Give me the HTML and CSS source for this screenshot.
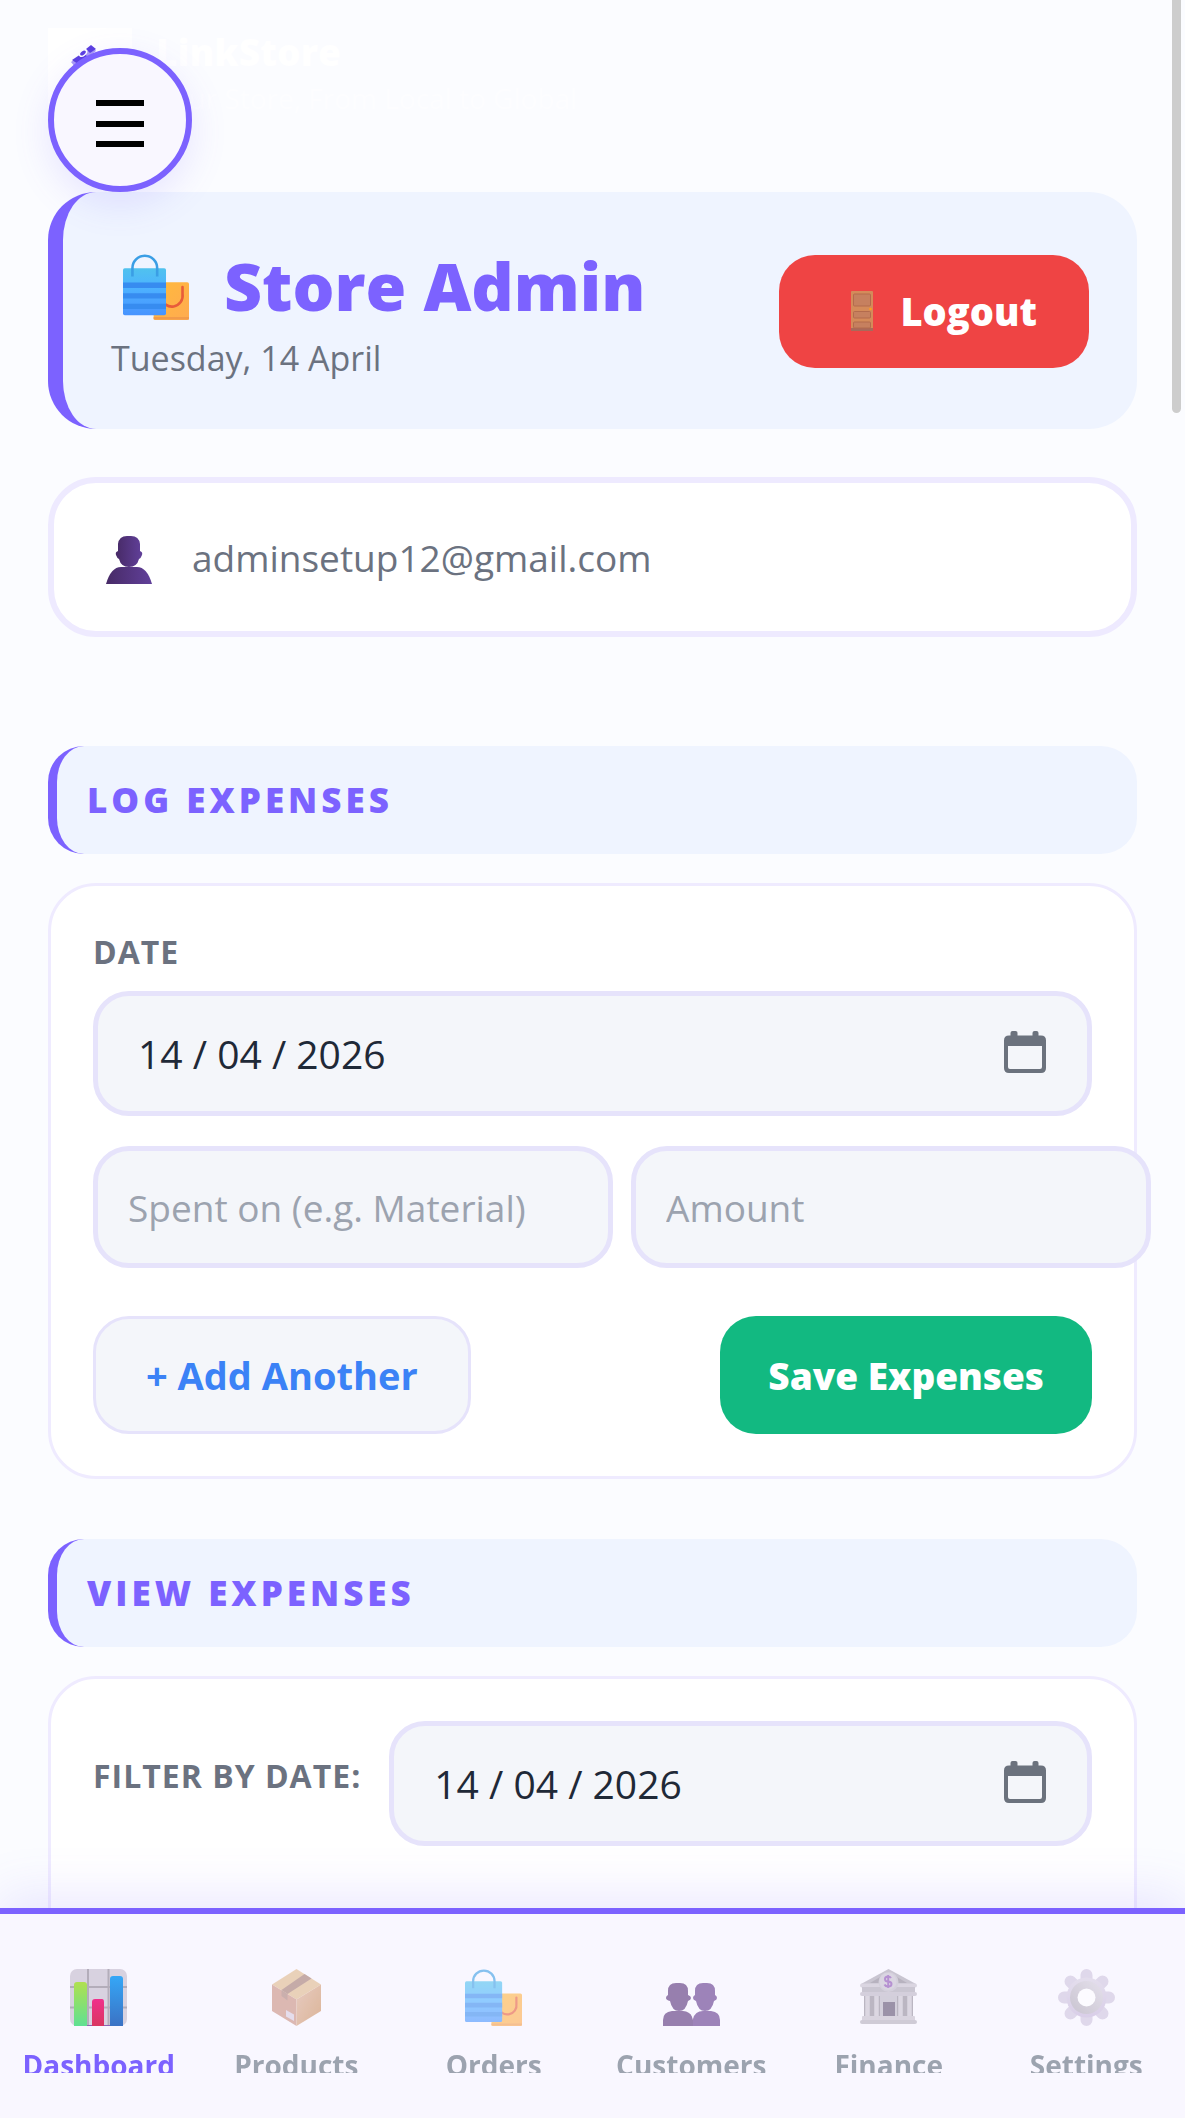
FILE: index.html
```
<!DOCTYPE html>
<html lang="en">
<head>
<meta charset="utf-8">
<meta name="viewport" content="width=device-width, initial-scale=1">
<title>LinkStore – Store Admin</title>
<link rel="stylesheet" href="styles.css">
</head>
<body>
<svg class="defs" aria-hidden="true">
  <defs>
    <linearGradient id="bagBlue" x1="0" y1="0" x2="0" y2="1"><stop offset="0" stop-color="#50c2ee"/><stop offset=".4" stop-color="#4db3ff"/><stop offset="1" stop-color="#4793ff"/></linearGradient>
    <linearGradient id="bagOrange" x1="0" y1="0" x2="1" y2="1"><stop offset="0" stop-color="#ffba3c"/><stop offset="1" stop-color="#ffab50"/></linearGradient>
    <linearGradient id="plum" x1="0" y1="0" x2="1" y2="0"><stop offset="0" stop-color="#472a66"/><stop offset="1" stop-color="#61409a"/></linearGradient>
    <linearGradient id="barGreen" x1="0" y1="0" x2="0" y2="1"><stop offset="0" stop-color="#b0e050"/><stop offset="1" stop-color="#5fe092"/></linearGradient>
    <linearGradient id="barRed" x1="0" y1="0" x2="0" y2="1"><stop offset="0" stop-color="#f0308c"/><stop offset="1" stop-color="#d93660"/></linearGradient>
    <linearGradient id="barBlue" x1="0" y1="0" x2="0" y2="1"><stop offset="0" stop-color="#35a7f7"/><stop offset="1" stop-color="#3b72c4"/></linearGradient>
    <linearGradient id="boxRight" x1="0" y1="0" x2="1" y2="1"><stop offset="0" stop-color="#dcae98"/><stop offset="1" stop-color="#c98a55"/></linearGradient>
    <linearGradient id="gearFill" x1="0" y1="0" x2="0" y2="1"><stop offset="0" stop-color="#d6cee2"/><stop offset="1" stop-color="#c5b4da"/></linearGradient>
    <linearGradient id="gearRing" x1="1" y1="0" x2="0" y2="1"><stop offset="0" stop-color="#d8d2e0"/><stop offset="1" stop-color="#aaa3b2"/></linearGradient>
  </defs>
  <symbol id="bags" viewBox="0 0 56 56">
    <rect x="26" y="24" width="30" height="32" rx="1.5" fill="url(#bagOrange)"/>
    <path d="M26 54.500h30" stroke="#f29b4a" stroke-width="2"/>
    <path d="M50.500 28v6a9 9 0 0 1-18 3" fill="none" stroke="#e85c3a" stroke-width="2.200" stroke-linecap="round"/>
    <rect y="12" width="36.500" height="40" rx="1.500" fill="url(#bagBlue)"/>
    <path d="M0 26.500h36.500M0 35.500h36.500M0 44.500h36.500" stroke="#378cf0" stroke-width="4.500"/>
    <path d="M8 19v-7a10.500 10.500 0 0 1 21 0v7" fill="none" stroke="#3a9ee5" stroke-width="2.200"/>
  </symbol>
  <symbol id="person" viewBox="0 0 46 48">
    <path d="M12 8q1-8 9-8h4q8 0 9 8v7q3 1 2 4t-3 4q-2 8-10 8t-10-8q-2-1-3-4t2-4z" fill="url(#plum)"/>
    <path d="M0 48q5-17 15-17h16q10 0 15 17z" fill="url(#plum)"/>
  </symbol>
  <symbol id="people" viewBox="0 0 57 57">
    <g fill="#61378c">
      <path d="M32 22q0-8 8-8h4q8 0 8 8v4q2 1 2 3t-3 3q-2 10-9 10t-9-10q-3-1-3-3t2-3zM30 57V50q2-8 10-8h8q9 1 9 9v6z"/>
    </g>
    <g fill="#57307a">
      <path d="M5 22q0-8 8-8h4q8 0 8 8v4q3 1 3 3t-3 3q-2 10-9 10T7 32q-4-1-4-3t2-3zM0 57v-6q0-8 9-9h11q9 1 10 9v6z"/>
    </g>
  </symbol>
  <symbol id="door" viewBox="0 0 22 40">
    <rect width="22" height="40" rx="1" fill="#d48b5a"/>
    <path d="M0 38.500h22" stroke="#a9695a" stroke-width="3"/>
    <g fill="#c6805f" stroke="#b36b4d"><rect x="2.500" y="3" width="17" height="12" rx="1"/><rect x="2.500" y="20.500" width="17" height="6.500" rx="1"/><rect x="2.500" y="31" width="17" height="6" rx="1"/></g>
    <circle cx="19.500" cy="18" r="1.300" fill="#ff9d1e"/>
  </symbol>
  <symbol id="chart" viewBox="0 0 57 57">
    <rect width="57" height="57" rx="7" fill="#d8d2e0"/>
    <path d="M0 18h57M0 38.500h57M18 0v57M38.500 0v57" stroke="#b3adba" stroke-width="2"/>
    <path d="M6 56.500h46" stroke="#8c62b4"/>
    <path d="M4 57V16q0-3 3-3h7q3 0 3 3v41z" fill="url(#barGreen)"/>
    <path d="M22 57V33q0-3 3-3h7q2 0 2 3v24z" fill="url(#barRed)"/>
    <path d="M40 57V10q0-3 3-3h7q3 0 3 3v47z" fill="url(#barBlue)"/>
  </symbol>
  <symbol id="box" viewBox="0 0 57 57">
    <path d="M28.500 0L53 15.500 28.500 30.500 4 15.500z" fill="#e0b98c"/>
    <path d="M4 15.500l24.500 15V57L4 42z" fill="#c98f80"/>
    <path d="M53 15.500l-24.500 15V57L53 42z" fill="url(#boxRight)"/>
    <path d="M36.500 5l7 4.500-24 15.500-6-4z" fill="#a37970"/>
    <path d="M13.500 21l6 4v6.500l-6-4.500z" fill="#ab8077"/>
    <path d="M18 41l8 4.500V52l-8-4.500z" fill="#d9cce0"/>
  </symbol>
  <symbol id="bank" viewBox="0 0 57 57">
    <path d="M28.500 0L56 15H1z" fill="#aaa4b3"/>
    <path d="M28.500 3L47 14H10z" fill="#8c8595"/>
    <rect y="14.500" width="57" height="4" rx="2" fill="#c6c0ce"/><rect x="2" y="18" width="53" height="6" fill="#aca6b5"/><rect y="23" width="57" height="4" rx="2" fill="#bcb6c5"/>
    <rect x="4" y="27" width="49" height="20" fill="#928b9b"/>
    <path d="M7.500 27v20M16.500 27v20M40.500 27v20M49.500 27v20" stroke="#c9c3d0" stroke-width="4.500"/>
    <path d="M20 27h17v20H20z" fill="#bbb5c4"/><path d="M23 33h12v14H23z" fill="#5e506f"/>
    <rect x="2" y="47" width="53" height="5" rx="1" fill="#c4becb"/><rect y="51" width="57" height="4" rx="2" fill="#b4aebc"/>
    <circle cx="28.500" cy="13" r="10" fill="#bdb7c6"/><circle cx="28" cy="12.500" r="8.500" fill="#c6c0cf"/>
    <path d="M31 9q-1-1.500-3-1.500-3 0-3 2.500t3 2.500q3.500 0 3.500 2.500t-3.500 2.500q-2.500 0-3.500-2M28.200 6v13" fill="none" stroke="#8a4fb5" stroke-width="2"/>
  </symbol>
  <symbol id="gear" viewBox="0 0 57 57">
    <path d="M28.500 6v45M6 28.500h45M12.500 12.500l32 32M44.500 12.500l-32 32" stroke="#cfc4de" stroke-width="12" stroke-linecap="round"/>
    <circle cx="28.500" cy="28.500" r="20" fill="url(#gearFill)"/>
    <circle cx="28.500" cy="28.500" r="16.500" fill="url(#gearRing)"/>
    <circle cx="28.500" cy="28.500" r="9" fill="#fff"/>
  </symbol>
  <symbol id="calendar" viewBox="0 0 42 42">
    <path fill-rule="evenodd" fill="#6b727d" d="M8.500 0h3q2 0 2 2v2.500h15V2q0-2 2-2h2q2 0 2 2v2.500H37q5 0 5 5V37q0 5-5 5H5q-5 0-5-5V9.500q0-5 5-5h1.500V2q0-2 2-2zM4 15v21q0 2 2 2h30q2 0 2-2V15z"/>
  </symbol>
</svg>

<div class="app">
  <header class="brand">
    <svg class="brand-logo" viewBox="0 0 84 84" role="img" aria-label="LinkStore">
      <rect width="84" height="84" fill="#fff"/>
      <path d="M23 34l22-15 3 4-21 16z" fill="#a99af5"/>
      <path d="M24 32l12-8 6 9-9 5zM38 21l5-4 5 4-6 4z" fill="#5b3fe0"/>
      <ellipse cx="35" cy="25" rx="4" ry="2.500" transform="rotate(-38 35 25)" fill="#5b3fe0" stroke="#fff" stroke-width="1.500"/>
    </svg>
    <div>
      <div class="brand-name">LinkStore</div>
      <div class="brand-tagline">Your Store, From Local to Global</div>
    </div>
  </header>

  <main>
    <section class="hero">
      <div>
        <h1 class="hero-title"><svg class="hero-icon" aria-hidden="true"><use href="#bags"/></svg>Store Admin</h1>
        <p class="hero-date">Tuesday, 14 April</p>
      </div>
      <button class="btn btn-logout" type="button"><svg class="door-icon" aria-hidden="true"><use href="#door"/></svg>Logout</button>
    </section>

    <div class="account">
      <svg class="account-icon" aria-hidden="true"><use href="#person"/></svg>
      <span>adminsetup12@gmail.com</span>
    </div>

    <h2 class="section-title">LOG EXPENSES</h2>
    <form class="card">
      <label class="label" for="expense-date">DATE</label>
      <div class="date-field">
        <input class="date-input" id="expense-date" type="text" value="14 / 04 / 2026">
        <button class="date-button" type="button" aria-label="Choose date"><svg class="calendar-icon" aria-hidden="true"><use href="#calendar"/></svg></button>
      </div>
      <div class="expense-row">
        <input class="text-input" type="text" placeholder="Spent on (e.g. Material)" aria-label="Spent on">
        <input class="text-input" type="text" placeholder="Amount" aria-label="Amount">
      </div>
      <div class="actions">
        <button class="btn btn-add" type="button">+ Add Another</button>
        <button class="btn btn-save" type="button">Save Expenses</button>
      </div>
    </form>

    <h2 class="section-title section-title-next">VIEW EXPENSES</h2>
    <section class="card card-results">
      <div class="filter">
        <label class="label" for="filter-date">FILTER BY DATE:</label>
        <div class="date-field">
          <input class="date-input" id="filter-date" type="text" value="14 / 04 / 2026">
          <button class="date-button" type="button" aria-label="Choose filter date"><svg class="calendar-icon" aria-hidden="true"><use href="#calendar"/></svg></button>
        </div>
      </div>
    </section>
  </main>
</div>

<button class="menu-button" type="button" aria-label="Open menu">
  <svg class="menu-icon" viewBox="0 0 48 48" aria-hidden="true"><path d="M0 3h48M0 24h48M0 44h48" stroke="#000" stroke-width="6"/></svg>
</button>

<nav class="tabbar">
  <div class="tabs">
    <a class="tab tab-active" href="#dashboard"><svg class="tab-icon" aria-hidden="true"><use href="#chart"/></svg>Dashboard</a>
    <a class="tab" href="#products"><svg class="tab-icon" aria-hidden="true"><use href="#box"/></svg>Products</a>
    <a class="tab" href="#orders"><svg class="tab-icon" aria-hidden="true"><use href="#bags"/></svg>Orders</a>
    <a class="tab" href="#customers"><svg class="tab-icon" aria-hidden="true"><use href="#people"/></svg>Customers</a>
    <a class="tab" href="#finance"><svg class="tab-icon" aria-hidden="true"><use href="#bank"/></svg>Finance</a>
    <a class="tab" href="#settings"><svg class="tab-icon" aria-hidden="true"><use href="#gear"/></svg>Settings</a>
  </div>
</nav>
<div class="scroll-thumb"></div>
</body>
</html>
```
FILE: styles.css
```
:root {
  --purple: #7c62ff;
  --tint: #eff4ff;
  --line: #efebff;
  --field: #f4f6fa;
  --field-line: #e6e3fb;
  --muted: #6b7280;
}

* { box-sizing: border-box; }

body {
  margin: 0;
  background: #fbfcff;
  color: #1f2937;
  font-family: "Open Sans", "Noto Sans", sans-serif;
  font-size: 37px;
}

button, input { font: inherit; color: inherit; margin: 0; }
h1, h2, p { margin: 0; }
svg { display: block; flex: none; }
.defs { position: absolute; width: 0; height: 0; }

.app {
  height: 100vh;
  overflow-x: hidden;
  overflow-y: auto;
  scrollbar-width: none;
  padding: 28px 48px 240px;
}

/* Brand */
.brand {
  display: flex;
  gap: 24px;
  height: 164px;
  color: #fff;
}
.brand-logo { width: 84px; height: 84px; }
.brand-name { font-size: 37px; font-weight: 800; line-height: 48px; }
.brand-tagline { font-size: 28px; line-height: 44px; opacity: .6; }

/* Hero */
.hero {
  display: flex;
  align-items: center;
  justify-content: space-between;
  padding: 48px 48px 47px;
  background: var(--tint);
  border-left: 15px solid var(--purple);
  border-radius: 48px;
}
.hero-title {
  display: flex;
  align-items: center;
  gap: 35px;
  color: var(--purple);
  font-size: 66px;
  font-weight: 800;
  line-height: 90px;
}
.hero-icon { width: 66px; height: 66px; margin: 4px 0 0 12px; }
.hero-date {
  margin-top: 4px;
  color: var(--muted);
  font-size: 34px;
  line-height: 48px;
}

.btn {
  display: flex;
  align-items: center;
  justify-content: center;
  border: 0;
  border-radius: 36px;
  font-weight: 800;
  white-space: nowrap;
}
.btn-logout {
  gap: 27px;
  height: 113px;
  padding: 0 52px 0 72px;
  background: #ef4444;
  color: #fff;
  font-size: 38px;
}
.door-icon { width: 22px; height: 40px; }

/* Account */
.account {
  display: flex;
  align-items: center;
  gap: 40px;
  height: 160px;
  margin-top: 48px;
  padding: 0 52px;
  background: #fff;
  border: 6px solid #eeeaff;
  border-radius: 48px;
  color: var(--muted);
}
.account-icon { width: 46px; height: 48px; margin-top: 6px; }

/* Sections */
.section-title {
  margin: 109px 0 29px;
  padding: 30px;
  background: var(--tint);
  border-left: 9px solid var(--purple);
  border-radius: 36px;
  color: var(--purple);
  font-size: 35px;
  font-weight: 800;
  line-height: 48px;
  letter-spacing: 4px;
}
.section-title-next { margin-top: 60px; }

.card {
  padding: 42px;
  background: #fff;
  border: 3px solid var(--line);
  border-radius: 48px;
}
.card-results { padding-bottom: 180px; }

.label {
  display: block;
  margin-bottom: 15px;
  color: var(--muted);
  font-size: 32px;
  font-weight: 700;
  line-height: 48px;
  letter-spacing: 1px;
  white-space: nowrap;
}

.date-field {
  display: flex;
  align-items: center;
  flex: 1;
  height: 125px;
  padding: 0 40px;
  background: var(--field);
  border: 5px solid var(--field-line);
  border-radius: 36px;
}
.date-input {
  flex: 1;
  min-width: 0;
  padding: 0;
  border: 0;
  outline: 0;
  background: none;
  font-size: 39px;
}
.date-button { padding: 0 1px 4px 0; border: 0; background: none; }
.calendar-icon { width: 42px; height: 42px; }

/* The amount column runs past the card edge */
.expense-row {
  display: grid;
  grid-template-columns: 1fr 1fr;
  gap: 18px;
  margin: 30px -59px 48px 0;
}
.text-input {
  min-width: 0;
  height: 122px;
  padding: 0 30px;
  background: var(--field);
  border: 5px solid var(--field-line);
  border-radius: 36px;
}
.text-input::placeholder { color: #9ca3af; opacity: 1; }

.actions { display: flex; justify-content: space-between; }
.actions .btn { height: 118px; padding: 0 48px; }
.actions .btn-add {
  padding: 0 50px;
  background: var(--field);
  border: 3px solid var(--field-line);
  color: #3b82f6;
  font-size: 38px;
  font-weight: 700;
}
.btn-save { background: #12b981; color: #fff; }

.filter { display: flex; align-items: center; gap: 28px; }

/* Floating menu */
.menu-button {
  position: fixed;
  top: 48px;
  left: 48px;
  display: grid;
  place-items: center;
  width: 144px;
  height: 144px;
  padding: 8px 0 0;
  background: #f9f7ff;
  border: 6px solid var(--purple);
  border-radius: 50%;
  box-shadow: 0 12px 36px rgba(124, 98, 255, .15);
}
.menu-icon { width: 48px; height: 48px; }

/* Tab bar */
.tabbar {
  position: fixed;
  right: 0;
  bottom: 0;
  left: 0;
  padding-bottom: 45px;
  background: #f9f7ff;
  border-top: 6px solid var(--purple);
  box-shadow: 0 -12px 48px rgba(124, 98, 255, .15);
}
.tabs {
  display: grid;
  grid-template-columns: repeat(6, 1fr);
  height: 159px;
  overflow: hidden;
}
.tab {
  display: flex;
  flex-direction: column;
  align-items: center;
  gap: 20px;
  padding-top: 55px;
  color: #9ca3af;
  font-size: 28px;
  font-weight: 700;
  line-height: 38px;
  text-decoration: none;
}
.tab-icon { width: 57px; height: 57px; opacity: .6; }
.tab-active { color: var(--purple); }
.tab-active .tab-icon { opacity: 1; }

.scroll-thumb {
  position: fixed;
  top: 0;
  right: 4px;
  width: 9px;
  height: 413px;
  background: #cdcdcd;
  border-radius: 0 0 5px 5px;
}
```
